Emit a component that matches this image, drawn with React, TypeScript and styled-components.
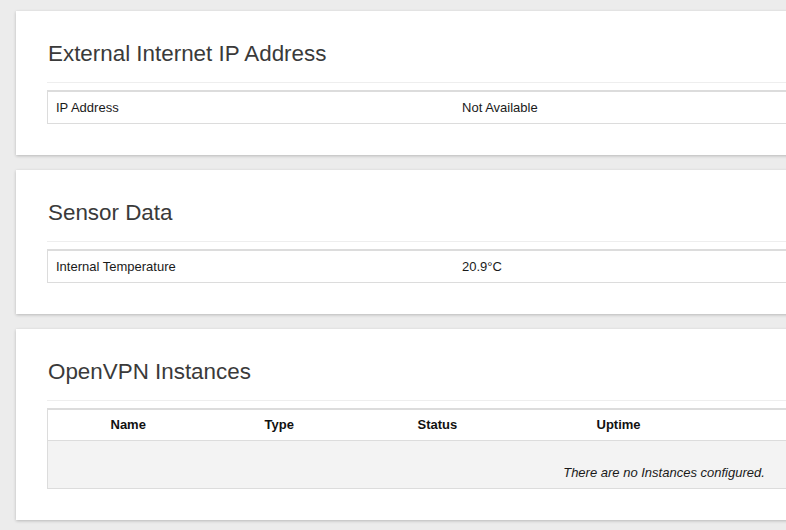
import { FunctionComponent, ReactNode } from "react";
import styled, { createGlobalStyle } from "styled-components";

const GlobalStyle = createGlobalStyle`
  html, body {
    margin: 0;
    padding: 0;
    overflow: hidden;
    background: #ececec;
  }
  body {
    font-family: "Liberation Sans", Arial, sans-serif;
    font-size: 13px;
    color: #1f1f1f;
  }
`;

type InfoRow = { label: string; value: ReactNode };

type InstanceColumn = { title: string; width: number };

const instanceColumns: InstanceColumn[] = [
  { title: "", width: 55 },
  { title: "Name", width: 154 },
  { title: "Type", width: 153 },
  { title: "Status", width: 179 },
  { title: "Uptime", width: 692 },
];

const Card: FunctionComponent<{ title: string; children: ReactNode }> = ({
  title,
  children,
}) => (
  <Panel>
    <Heading>{title}</Heading>
    <Divider />
    {children}
  </Panel>
);

const InfoTable: FunctionComponent<{ rows: InfoRow[] }> = ({ rows }) => (
  <Table>
    <colgroup>
      <col style={{ width: "33%" }} />
      <col />
    </colgroup>
    <tbody>
      {rows.map((row) => (
        <tr key={row.label}>
          <Cell>{row.label}</Cell>
          <Cell>{row.value}</Cell>
        </tr>
      ))}
    </tbody>
  </Table>
);

export default function App() {
  return (
    <>
      <GlobalStyle />
      <Page>
        <Card title="External Internet IP Address">
          <InfoTable rows={[{ label: "IP Address", value: "Not Available" }]} />
        </Card>
        <Card title="Sensor Data">
          <InfoTable
            rows={[{ label: "Internal Temperature", value: "20.9°C" }]}
          />
        </Card>
        <Card title="OpenVPN Instances">
          <Table>
            <colgroup>
              {instanceColumns.map((c, i) => (
                <col key={i} style={{ width: c.width }} />
              ))}
            </colgroup>
            <thead>
              <tr>
                {instanceColumns.map((c, i) => (
                  <HeadCell key={i}>{c.title}</HeadCell>
                ))}
              </tr>
            </thead>
            <tbody>
              <EmptyRow>
                <EmptyCell colSpan={instanceColumns.length}>
                  There are no Instances configured.
                </EmptyCell>
              </EmptyRow>
            </tbody>
          </Table>
        </Card>
      </Page>
    </>
  );
}

const Page = styled.div`
  display: flex;
  flex-direction: column;
  gap: 15.5px;
  padding: 11px 0 20px 16px;
  width: 1295px;
`;

const Panel = styled.section`
  background: #fff;
  box-shadow: 0 1px 3px rgba(0, 0, 0, 0.22);
  padding: 31px 31px 31px 31px;
`;

const Heading = styled.h2`
  margin: 0 0 0 1px;
  font-size: 22.4px;
  line-height: 23.6px;
  font-weight: 400;
  color: #3a3a3a;
`;

const Divider = styled.div`
  height: 1px;
  background: #eeeeee;
  margin: 16px 0 7px 0;
`;

const Table = styled.table`
  width: 100%;
  table-layout: fixed;
  border-collapse: collapse;
  border: 1px solid #dcdcdc;
  border-top: 2px solid #dcdcdc;
`;

const Cell = styled.td`
  padding: 8px;
  line-height: 15px;
  color: #1a1a1a;
  text-align: left;
  white-space: nowrap;
`;

const HeadCell = styled.th`
  padding: 7px 8px 8px;
  line-height: 15px;
  font-weight: 700;
  color: #111;
  text-align: left;
  border-bottom: 1px solid #dcdcdc;
`;

const EmptyRow = styled.tr`
  background: #f3f3f3;
`;

const EmptyCell = styled.td`
  padding: 24px 8px 8px;
  line-height: 15px;
  font-style: italic;
  text-align: center;
  color: #1a1a1a;
`;
